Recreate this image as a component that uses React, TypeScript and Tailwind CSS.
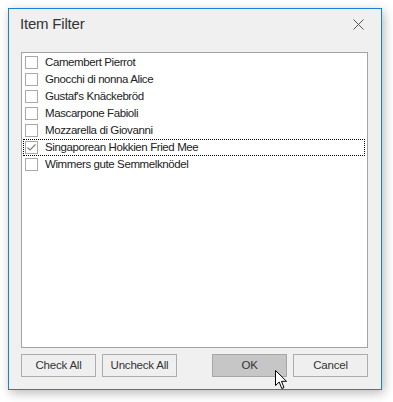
import { useState } from 'react'

const ITEMS = [
  'Camembert Pierrot',
  'Gnocchi di nonna Alice',
  "Gustaf's Knäckebröd",
  'Mascarpone Fabioli',
  'Mozzarella di Giovanni',
  'Singaporean Hokkien Fried Mee',
  'Wimmers gute Semmelknödel',
]

function CheckBox({ checked }: { checked: boolean }) {
  return (
    <span className="flex h-[13px] w-[13px] shrink-0 items-center justify-center border border-[#a9a9a9] bg-white">
      {checked && (
        <svg width="11" height="11" viewBox="0 0 11 11" aria-hidden>
          <polyline points="1.5,5.5 4,8 9.5,2.5" fill="none" stroke="#7a7a7a" strokeWidth="1.1" />
        </svg>
      )}
    </span>
  )
}

function DialogButton({ label, hover }: { label: string; hover?: boolean }) {
  return (
    <button
      type="button"
      className={`flex h-[23px] w-[75px] items-center justify-center border text-[11.5px] tracking-[-0.2px] text-[#333] ${
        hover ? 'border-[#a6a6a6] bg-[#c6c6c6]' : 'border-[#acacac] bg-[#efefef]'
      }`}
    >
      {label}
    </button>
  )
}

export default function App() {
  const [checked] = useState<string[]>(['Singaporean Hokkien Fried Mee'])
  const focused = 'Singaporean Hokkien Fried Mee'

  return (
    <div
      className="relative h-[402px] w-[393px] bg-white pt-2 pl-2"
      style={{ fontFamily: '"Segoe UI", "Liberation Sans", Arial, sans-serif' }}
    >
      {/* Window */}
      <div className="flex h-[382px] w-[374px] flex-col border border-[#1c7fd6] bg-[#f0f0f0] shadow-[2px_3px_10px_rgba(0,0,0,0.28)]">
        {/* Title bar */}
        <div className="flex h-[30px] shrink-0 items-center justify-between pr-[17px] pl-[11px]">
          <span className="text-[15px] tracking-[-0.2px] text-[#333]">Item Filter</span>
          <svg width="11" height="11" viewBox="0 0 11 11" aria-hidden>
            <path d="M0.5 0.5 L10.5 10.5 M10.5 0.5 L0.5 10.5" stroke="#555" strokeWidth="1" />
          </svg>
        </div>

        {/* List */}
        <div className="mt-[13px] ml-3 h-[296px] w-[347px] border border-[#a3a3a3] bg-white p-px">
          {ITEMS.map((item) => {
            const isFocused = item === focused
            return (
              <div
                key={item}
                className={`flex h-[17px] items-center gap-[7px] text-[11.5px] tracking-[-0.4px] text-[#222] ${
                  isFocused ? 'mr-px border border-dotted border-black pl-px' : 'pl-[2px]'
                }`}
              >
                <CheckBox checked={checked.includes(item)} />
                <span className="leading-none">{item}</span>
              </div>
            )
          })}
        </div>

        {/* Buttons */}
        <div className="mt-[6px] ml-3 flex w-[347px] items-center">
          <div className="flex gap-[6px]">
            <DialogButton label="Check All" />
            <DialogButton label="Uncheck All" />
          </div>
          <div className="ml-auto flex gap-[6px]">
            <DialogButton label="OK" hover />
            <DialogButton label="Cancel" />
          </div>
        </div>
      </div>

      {/* Mouse cursor */}
      <svg
        className="absolute top-[370px] left-[275px]"
        width="13"
        height="20"
        viewBox="0 0 13 20"
        aria-hidden
      >
        <path
          d="M0.5 0.5 L0.5 15.5 L4.2 12 L6.8 18.5 L9 17.6 L6.5 11.3 L11.5 11.3 Z"
          fill="#fff"
          stroke="#000"
          strokeWidth="1"
          strokeLinejoin="miter"
        />
      </svg>
    </div>
  )
}
